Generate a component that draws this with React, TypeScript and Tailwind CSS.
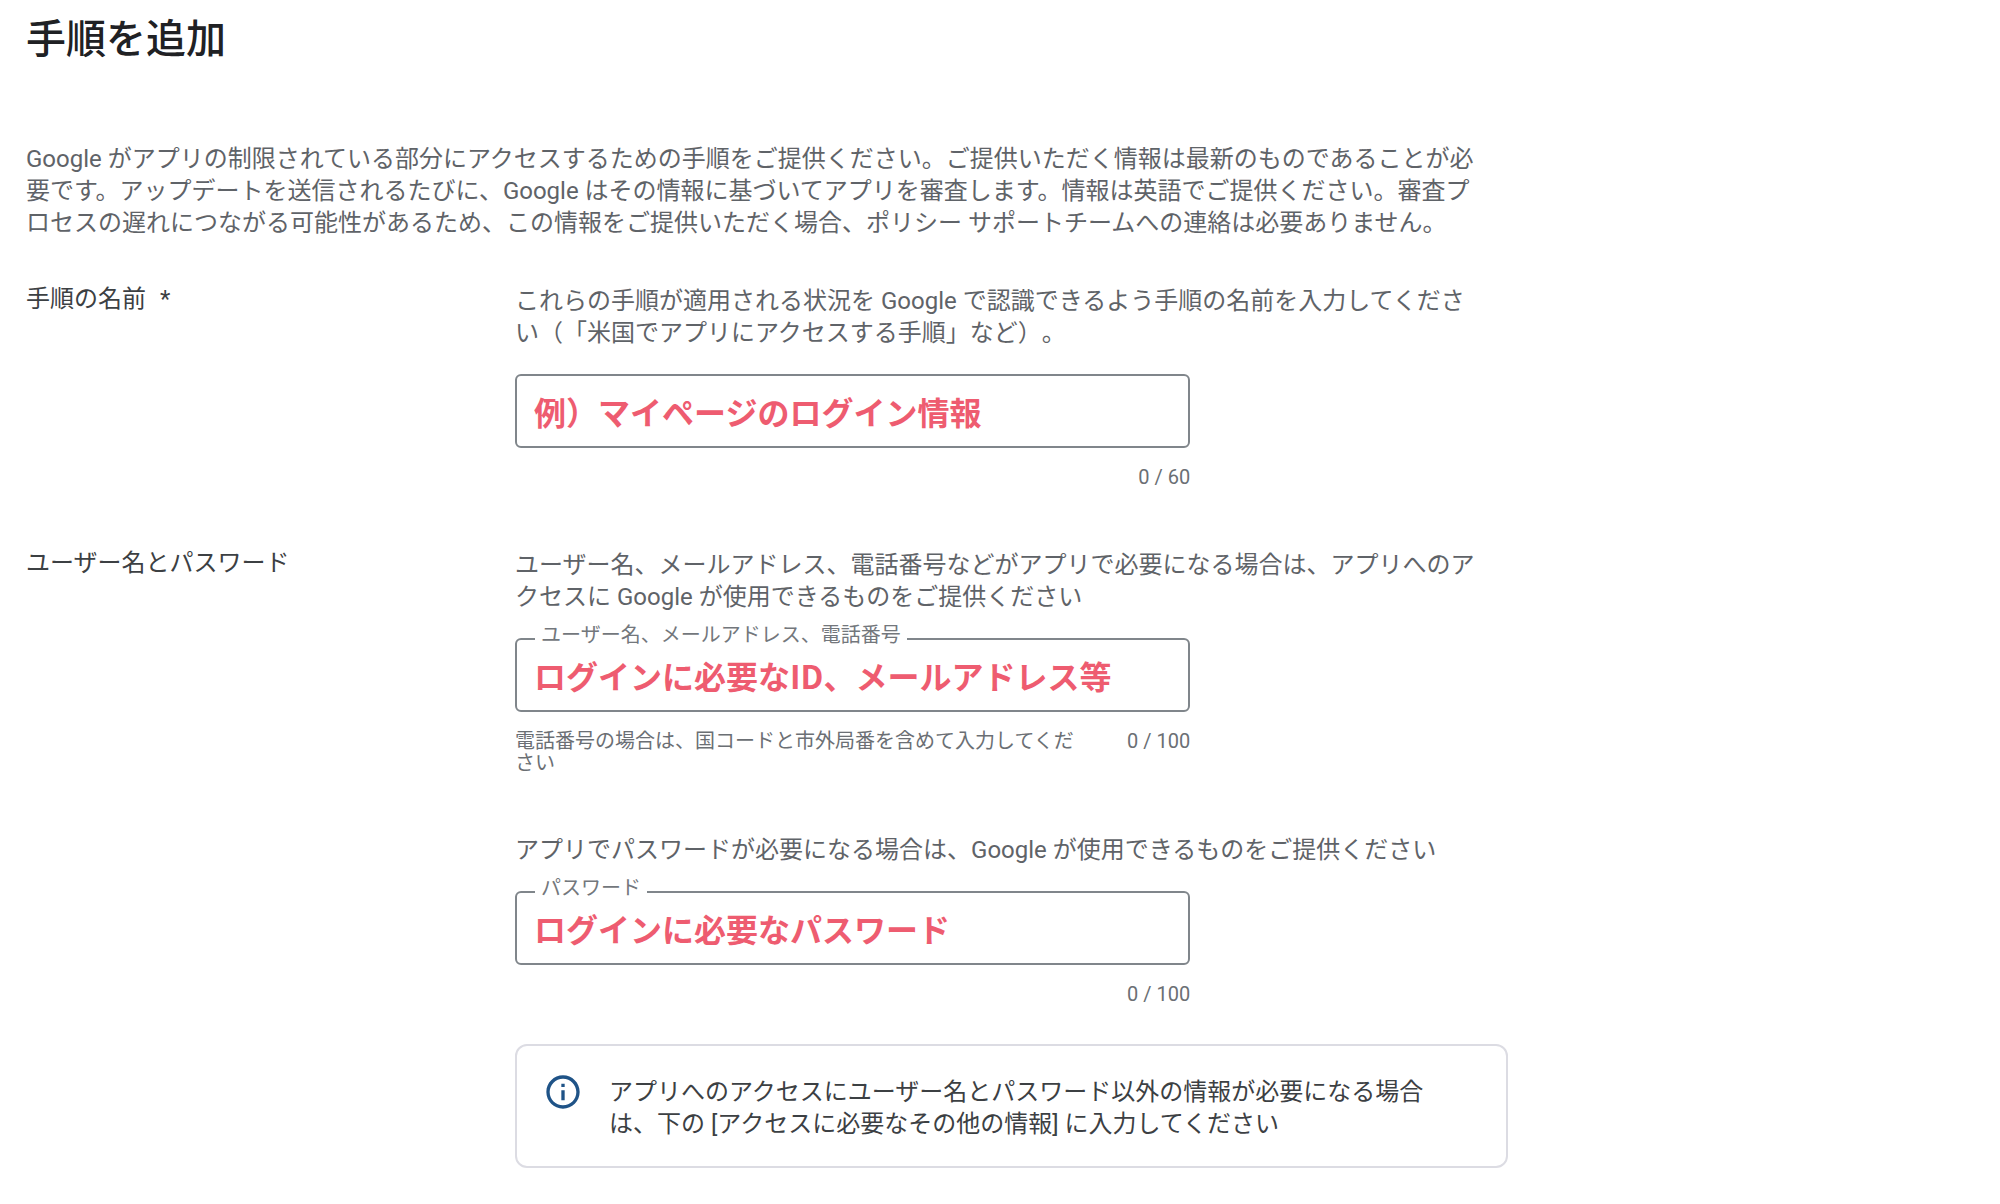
import React from 'react';
import { MdInfoOutline } from 'react-icons/md';

interface TextFieldProps {
  id: string;
  value: string;
  max: number;
  label?: string;
  hint?: string;
}

const TextField: React.FC<TextFieldProps> = ({ id, value, max, label, hint }) => {
  return (
    <div className="mt-[25px] w-[68%]">
      <div className="relative">
        <input
          id={id}
          type="text"
          defaultValue={value}
          className="block h-[74px] w-full rounded-md border-2 border-[#80868b] bg-white px-[17px] font-['Noto_Sans_CJK_JP',sans-serif] text-[32px] font-bold text-[#ee5c70] outline-none"
        />
        {label && (
          <label
            htmlFor={id}
            className="absolute -top-3.5 left-5 bg-white px-1.5 text-xl leading-[22px] text-[#73777c]"
          >
            {label}
          </label>
        )}
      </div>
      <div className="mt-[18px] flex justify-between gap-10 text-xl leading-[22px] text-[#6b6f74]">
        <p>{hint}</p>
        <span className="shrink-0">0 / {max}</span>
      </div>
    </div>
  );
};

const App: React.FC = () => {
  return (
    <main
      lang="ja"
      className="min-h-screen bg-white pt-4 pb-9 pl-[26px] font-[Roboto,'Noto_Sans_CJK_JP',sans-serif] text-2xl leading-8 text-[#5f6368] [text-spacing-trim:space-all]"
    >
      <div className="w-full max-w-[1482px]">
        <h1 className="text-[40px] leading-[48px] font-medium text-[#202124]">手順を追加</h1>

        <p className="mt-[79px] pr-6">
          Google がアプリの制限されている部分にアクセスするための手順をご提供ください。ご提供いただく情報は最新のものであることが必要です。アップデートを送信されるたびに、Google はその情報に基づいてアプリを審査します。情報は英語でご提供ください。審査プロセスの遅れにつながる可能性があるため、この情報をご提供いただく場合、ポリシー サポートチームへの連絡は必要ありません。
        </p>

        {/* Instruction name */}
        <section className="mt-11 flex">
          <label htmlFor="instruction-name" className="w-[33%] shrink-0 text-[#3c4043]">
            手順の名前<span className="ml-3.5">*</span>
          </label>
          <div className="grow pt-0.5">
            <p className="pr-6">
              これらの手順が適用される状況を Google で認識できるよう手順の名前を入力してください（「米国でアプリにアクセスする手順」など）。
            </p>
            <TextField id="instruction-name" value="例）マイページのログイン情報" max={60} />
          </div>
        </section>

        {/* Credentials */}
        <section className="mt-[59px] flex">
          <h2 className="w-[33%] shrink-0 text-[#3c4043]">ユーザー名とパスワード</h2>
          <div className="grow pt-0.5">
            <p className="pr-6">
              ユーザー名、メールアドレス、電話番号などがアプリで必要になる場合は、アプリへのアクセスに Google が使用できるものをご提供ください
            </p>
            <TextField
              id="username"
              label="ユーザー名、メールアドレス、電話番号"
              value="ログインに必要なID、メールアドレス等"
              hint="電話番号の場合は、国コードと市外局番を含めて入力してください"
              max={100}
            />

            <p className="mt-15 pr-6">
              アプリでパスワードが必要になる場合は、Google が使用できるものをご提供ください
            </p>
            <TextField id="password" label="パスワード" value="ログインに必要なパスワード" max={100} />

            <div className="mt-[39px] flex gap-[26px] rounded-xl border-2 border-[#dcdce3] p-[26px] pr-[68px] text-[#3c4043]">
              <MdInfoOutline className="size-10 shrink-0 text-[#1f5387]" />
              <p className="pt-1">
                アプリへのアクセスにユーザー名とパスワード以外の情報が必要になる場合は、下の [アクセスに必要なその他の情報] に入力してください
              </p>
            </div>
          </div>
        </section>
      </div>
    </main>
  );
};

export default App;
